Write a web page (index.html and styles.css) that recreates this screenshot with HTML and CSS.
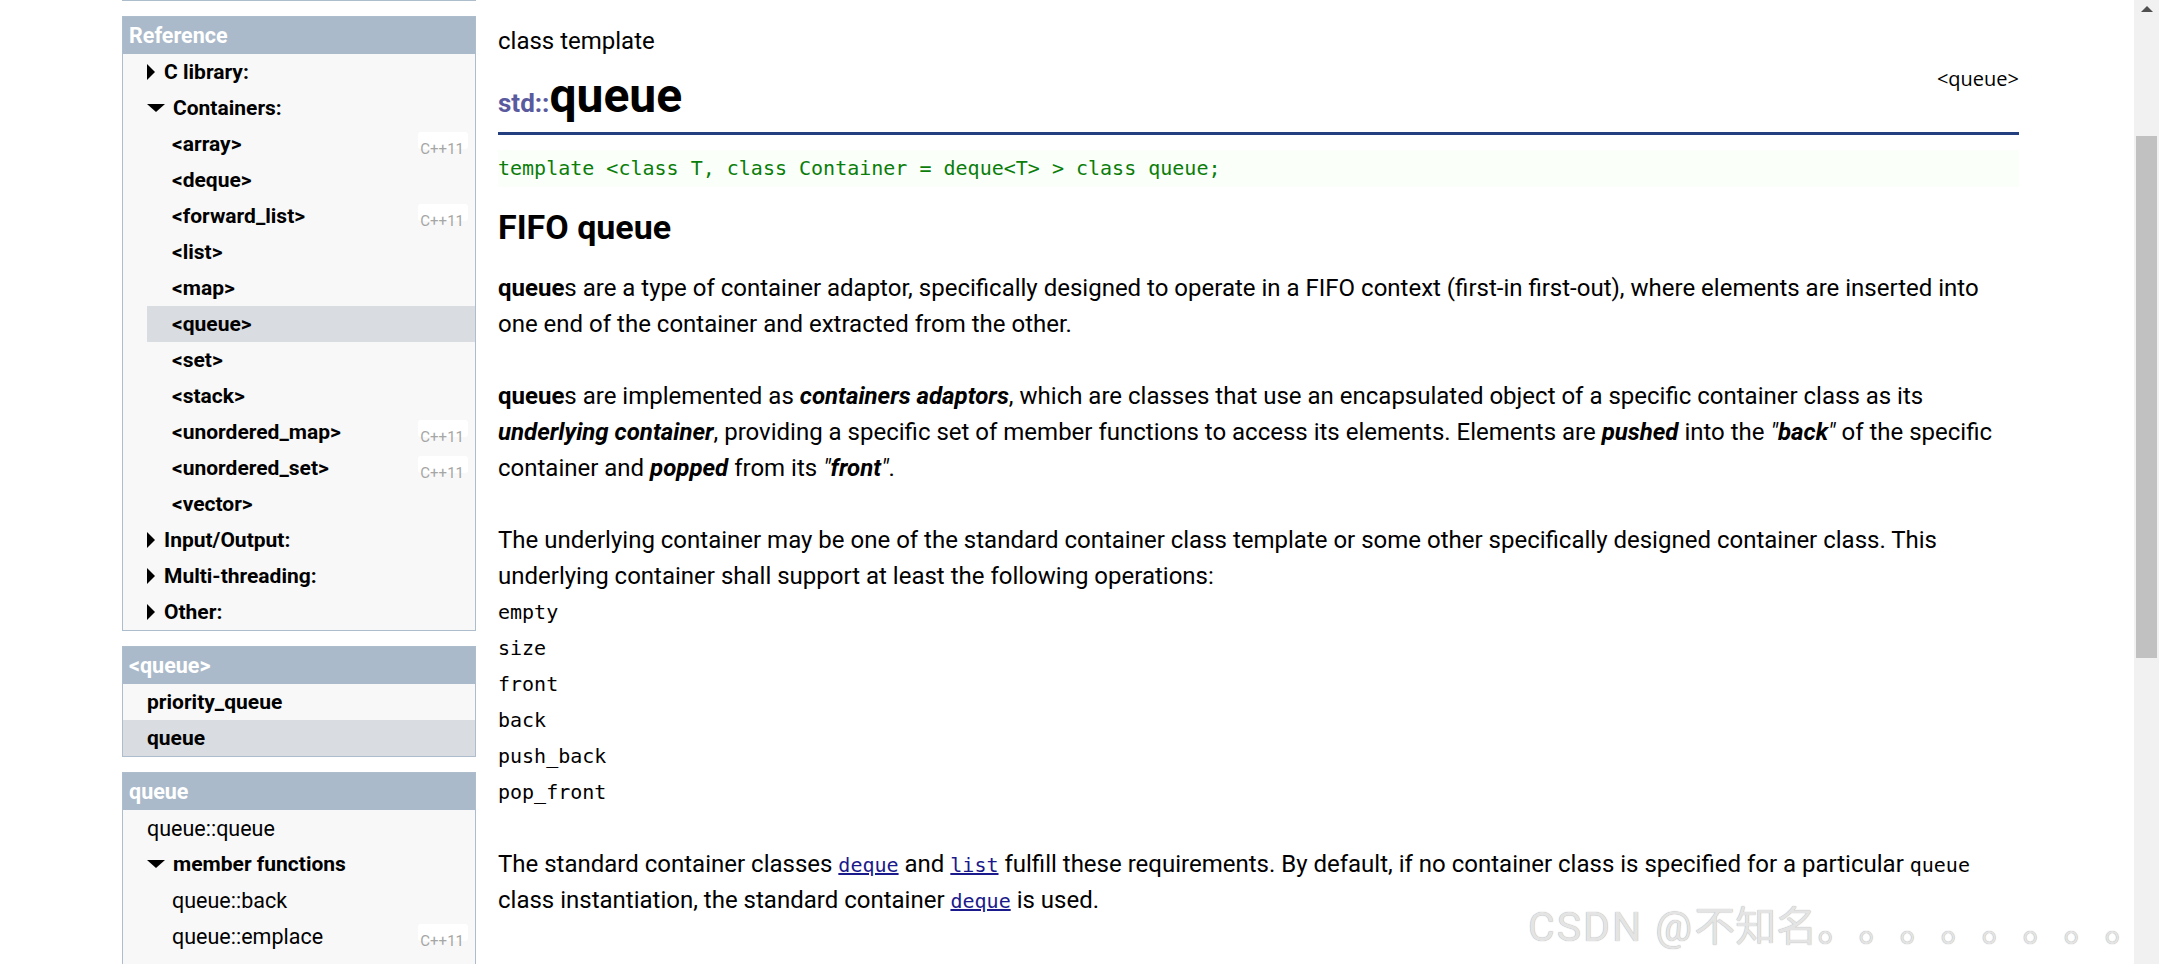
FILE: index.html
```html
<!DOCTYPE html>
<html lang="en">
<head>
<meta charset="utf-8">
<title>queue - C++ Reference</title>
<link rel="stylesheet" href="styles.css">
</head>
<body>
<div class="window">
  <div class="page">
    <aside class="sidebar">
      <div class="prev-box"></div>
      <div class="box">
        <div class="box-head">Reference</div>
        <ul class="tree">
          <li class="row l1 b"><span class="tri right"></span>C library:</li>
          <li class="row l1 b"><span class="tri down"></span>Containers:</li>
          <li class="row l2 b">&lt;array&gt;<span class="badge">C++11</span></li>
          <li class="row l2 b">&lt;deque&gt;</li>
          <li class="row l2 b">&lt;forward_list&gt;<span class="badge">C++11</span></li>
          <li class="row l2 b">&lt;list&gt;</li>
          <li class="row l2 b">&lt;map&gt;</li>
          <li class="row l2 b sel-sub">&lt;queue&gt;</li>
          <li class="row l2 b">&lt;set&gt;</li>
          <li class="row l2 b">&lt;stack&gt;</li>
          <li class="row l2 b">&lt;unordered_map&gt;<span class="badge">C++11</span></li>
          <li class="row l2 b">&lt;unordered_set&gt;<span class="badge">C++11</span></li>
          <li class="row l2 b">&lt;vector&gt;</li>
          <li class="row l1 b"><span class="tri right"></span>Input/Output:</li>
          <li class="row l1 b"><span class="tri right"></span>Multi-threading:</li>
          <li class="row l1 b"><span class="tri right"></span>Other:</li>
        </ul>
      </div>
      <div class="box">
        <div class="box-head">&lt;queue&gt;</div>
        <ul class="tree">
          <li class="row l1 b">priority_queue</li>
          <li class="row l1 b sel">queue</li>
        </ul>
      </div>
      <div class="box">
        <div class="box-head">queue</div>
        <ul class="tree">
          <li class="row l1">queue::queue</li>
          <li class="row l1 b"><span class="tri down"></span>member functions</li>
          <li class="row l2">queue::back</li>
          <li class="row l2">queue::emplace<span class="badge">C++11</span></li>
          <li class="row l2">queue::empty</li>
          <li class="row l2">queue::front</li>
          <li class="row l2">queue::pop</li>
          <li class="row l2">queue::push</li>
        </ul>
      </div>
    </aside>

    <main class="content">
      <div class="kind">class template</div>
      <div class="title-row">
        <h1><span class="ns">std::</span>queue</h1>
        <div class="header-tag">&lt;queue&gt;</div>
      </div>
      <div class="proto">template &lt;class T, class Container = deque&lt;T&gt; &gt; class queue;</div>
      <h2>FIFO queue</h2>
      <p><b>queue</b>s are a type of container adaptor, specifically designed to operate in a FIFO context (first-in first-out), where elements are inserted into one end of the container and extracted from the other.</p>
      <p><b>queue</b>s are implemented as <b><i>containers adaptors</i></b>, which are classes that use an encapsulated object of a specific container class as its <b><i>underlying container</i></b>, providing a specific set of member functions to access its elements. Elements are <b><i>pushed</i></b> into the <i>"<b>back</b>"</i> of the specific container and <b><i>popped</i></b> from its <i>"<b>front</b>"</i>.</p>
      <div class="ops-intro">The underlying container may be one of the standard container class template or some other specifically designed container class. This underlying container shall support at least the following operations:</div>
      <ul class="ops">
        <li>empty</li>
        <li>size</li>
        <li>front</li>
        <li>back</li>
        <li>push_back</li>
        <li>pop_front</li>
      </ul>
      <p>The standard container classes <a class="code-link" href="#">deque</a> and <a class="code-link" href="#">list</a> fulfill these requirements. By default, if no container class is specified for a particular <code>queue</code> class instantiation, the standard container <a class="code-link" href="#">deque</a> is used.</p>
    </main>
  </div>

  <div class="scrollbar">
    <div class="sb-btn"><span class="sb-up"></span></div>
    <div class="sb-track"><div class="sb-thumb"></div></div>
  </div>

  <div class="watermark"><span class="wm-latin">CSDN @</span>不知名。。。。。。。。</div>
</div>
</body>
</html>
```

FILE: styles.css
```css
html, body {
  margin: 0;
  padding: 0;
  background: #ffffff;
}

body {
  font-family: Roboto, "Noto Sans", "Liberation Sans", sans-serif;
  color: #000;
}

.window {
  position: relative;
  display: flex;
  width: 2159px;
  height: 964px;
  overflow: hidden;
}

.page {
  flex: 1;
  display: flex;
  align-items: flex-start;
  gap: 22px;
  padding-left: 122px;
}

/* ---------- Sidebar ---------- */
.sidebar {
  width: 354px;
  flex: none;
  font-size: 21.5px;
}

.prev-box {
  border-bottom: 1px solid #aebdcc;
  margin-bottom: 15px;
}

.box {
  border: 1px solid #aebdcc;
  background: #f8f8f8;
  margin-bottom: 15px;
}

.box-head {
  background: #abbaca;
  color: #ffffff;
  font-weight: 700;
  font-size: 21.5px;
  height: 37px;
  line-height: 37px;
  padding-left: 6px;
}

.tree {
  list-style: none;
  margin: 0;
  padding: 0;
}

.row {
  display: flex;
  align-items: center;
  height: 36px;
  white-space: nowrap;
}

.row.b {
  font-weight: 700;
  font-size: 21px;
}

.row.l1 {
  padding-left: 24px;
}

.row.l2 {
  padding-left: 49px;
}

.row.sel {
  background: #d9dce1;
}

.row.sel-sub {
  background: #d9dce1;
  margin-left: 24px;
  padding-left: 25px;
}

.tri {
  display: inline-block;
  width: 0;
  height: 0;
  flex: none;
}

.tri.right {
  border-top: 8px solid transparent;
  border-bottom: 8px solid transparent;
  border-left: 8px solid #000;
  margin-right: 9px;
}

.tri.down {
  border-left: 9px solid transparent;
  border-right: 9px solid transparent;
  border-top: 8px solid #000;
  margin-right: 8px;
}

.badge {
  align-self: flex-start;
  margin: 6px 7px 0 auto;
  height: 17px;
  line-height: 35px;
  padding: 0 4px 0 2px;
  background: #ffffff;
  border-radius: 3px;
  color: #a6a6a6;
  font-size: 15px;
  font-weight: 400;
}

/* ---------- Main content ---------- */
.content {
  width: 1521px;
  flex: none;
  padding-top: 23px;
  font-size: 24px;
  line-height: 36px;
}

.kind {
  line-height: 36px;
}

.title-row {
  display: flex;
  justify-content: space-between;
  align-items: flex-start;
  border-bottom: 3px solid #243f7f;
}

h1 {
  margin: 0;
  font-size: 48px;
  line-height: 73px;
  height: 73px;
  font-weight: 700;
}

.ns {
  font-size: 26px;
  line-height: 1;
  color: #5a5a9e;
}

.header-tag {
  font-family: "Open Sans", "Noto Sans", sans-serif;
  font-size: 20px;
  line-height: 24px;
  margin-top: 8px;
}

.proto {
  margin-top: 15px;
  height: 37px;
  line-height: 37px;
  background: #fafffa;
  color: #0a7d0a;
  font-family: "DejaVu Sans Mono", "Liberation Mono", monospace;
  font-size: 20px;
  white-space: pre;
}

h2 {
  margin: 18px 0 21px;
  font-size: 34px;
  line-height: 44px;
  font-weight: 700;
}

p {
  margin: 0 0 36px;
}

.ops {
  list-style: none;
  margin: 0 0 36px;
  padding: 0;
  font-family: "DejaVu Sans Mono", "Liberation Mono", monospace;
  font-size: 20px;
  line-height: 36px;
}

code,
.code-link {
  font-family: "DejaVu Sans Mono", "Liberation Mono", monospace;
  font-size: 20px;
  line-height: 1;
}

.code-link {
  color: #1a1a8c;
  text-decoration: underline;
}

/* ---------- Fake scrollbar ---------- */
.scrollbar {
  width: 25px;
  flex: none;
  background: #f1f1f1;
  display: flex;
  flex-direction: column;
}

.sb-btn {
  height: 17px;
  display: flex;
  justify-content: center;
  align-items: center;
}

.sb-up {
  width: 0;
  height: 0;
  border-left: 6px solid transparent;
  border-right: 6px solid transparent;
  border-bottom: 6px solid #505050;
}

.sb-track {
  flex: 1;
  padding: 119px 2px 0;
}

.sb-thumb {
  height: 522px;
  background: #c1c1c1;
}

/* ---------- Watermark ---------- */
.watermark {
  position: absolute;
  left: 1528px;
  top: 902px;
  font-family: Roboto, "Noto Sans CJK SC", sans-serif;
  font-size: 41px;
  line-height: 50px;
  color: #e4e4e4;
  text-shadow: 0 0 1px #9a9a9a;
  white-space: nowrap;
  text-spacing-trim: space-all;
}

.wm-latin {
  letter-spacing: 2px;
}
```
